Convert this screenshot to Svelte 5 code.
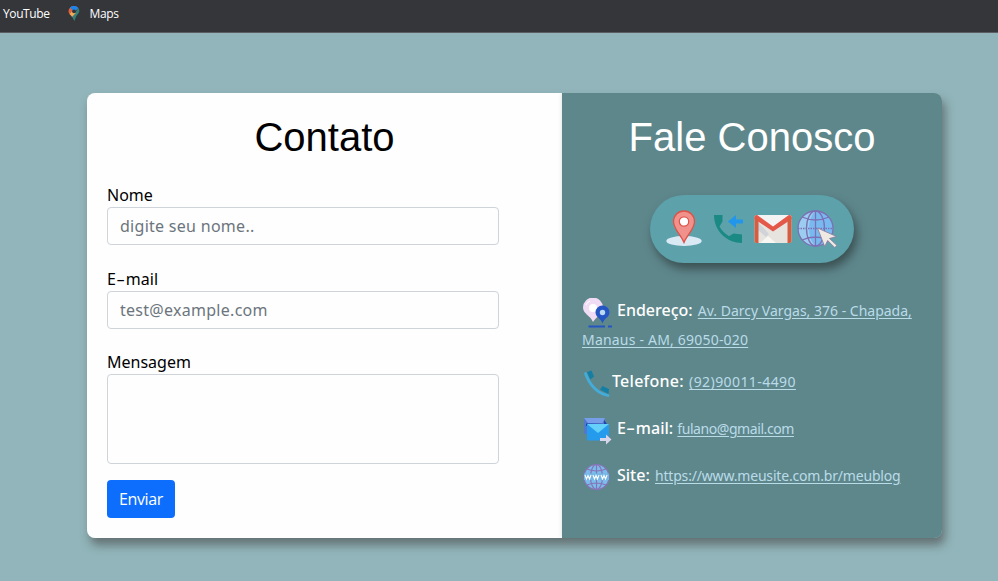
<script>
  let name = $state('');
  let email = $state('');
  let message = $state('');
</script>

<div class="page">
  <header>
    <span class="youtube">YouTube</span>
    <svg width="12" height="15" viewBox="0 0 12 15">
      <path d="M6 0a5.500 5.500 0 0 1 4.200 2L2.500 9.200C1.300 7.800.500 7 .500 5A5.500 5.500 0 0 1 6 0z" fill="#e0613d" />
      <path d="M2 1.600A5.500 5.500 0 0 1 10.300 2L6 6z" fill="#1a85ec" />
      <path d="M10.300 2c2.500 3.300 0 6-2 8L6.400 15 4.200 11z" fill="#34807a" />
      <path d="M1.700 8l2.500-3L7.800 7 4.100 10.900z" fill="#edab5b" />
      <circle cx="6" cy="5.300" r="1.900" fill="#35363a" />
    </svg>
    <span class="maps">Maps</span>
  </header>
  <main>
    <form>
      <h1>Contato</h1>
      <label for="nome">Nome</label>
      <input id="nome" class="i1" placeholder="digite seu nome.." bind:value={name} />
      <label for="email">E<span class="hyphen">-</span>mail</label>
      <input id="email" class="i2" placeholder="test@example.com" bind:value={email} />
      <label for="msg">Mensagem</label>
      <textarea id="msg" bind:value={message}></textarea>
      <button type="button">Enviar</button>
    </form>
    <section>
      <h1>Fale Conosco</h1>
      <div class="pill">
        <svg width="38" height="40" viewBox="0 0 38 40">
          <ellipse cx="19" cy="32" rx="17.700" ry="5" fill="#d9eaf5" />
          <path d="M19 33.500C16 26 8.500 20 8.500 12.500a10.500 10.500 0 0 1 21 0C29.500 20 22 26 19 33.500z" fill="#f0918b" stroke="#dd5348" stroke-width="1.300" />
          <circle cx="19" cy="12.500" r="4.700" fill="#fff" stroke="#dd5348" stroke-width="1.200" />
        </svg>
        <svg width="40" height="40" viewBox="0 0 40 40">
          <path d="M7 6h8.500v6.500l-3 5c2 4 5 7 9.500 9.700l4.500-2.700 8.500 1v8.500C20 34 7 22 7 6z" fill="#1b8984" />
          <path d="M21 12.500L29 6v4.500h7v4h-7V19z" fill="#2196ea" />
        </svg>
        <svg class="envelope" width="40" height="40" viewBox="0 0 40 40">
          <rect x="1.500" y="6" width="37" height="28" rx="2" fill="#e7e4df" />
          <path d="M4 6h32L20 20z" fill="#f3f3f3" />
          <path d="M5 13l11 12-3 3-8-7z" fill="#d0d3d7" />
          <path d="M7 34l8-7 8 7z" fill="#f7f6f2" />
          <path d="M1.500 8a2 2 0 0 1 3-1.700L20 17.500 35.500 6.300a2 2 0 0 1 3 1.700v2.200L20 22.500 1.500 10z" fill="#e35849" />
          <path d="M1.500 8v24q0 2 2 2h2V11zM38.500 8v24q0 2-2 2h-2V11z" fill="#d55d40" />
        </svg>
        <svg width="40" height="40" viewBox="0 0 40 40">
          <circle cx="18.500" cy="19.500" r="17.500" fill="#78baf0" />
          <path d="M18.500 2a17.500 17.500 0 0 0 0 35C10 30 10 9 18.500 2z" fill="#9ccdf0" />
          <g fill="none" stroke="#7b70b4" stroke-width="1.300">
            <circle cx="18.500" cy="19.500" r="17.500" /><ellipse cx="18.500" cy="19.500" rx="9" ry="17.500" />
            <path d="M18.500 2v35M5 8q13.500 6 27 0M5 31q13.500-6 27 0" /><path d="M1 19.500h35" stroke-dasharray="1.500 1" />
          </g>
          <path d="M20.500 19l19 8.500-7 2 7.500 7-2.300 2-7-7-3 6z" fill="#eee9e2" stroke="#8c789e" stroke-width=".8" />
        </svg>
      </div>
      <div class="contacts">
        <div class="row address">
          <svg width="30" height="30" viewBox="0 0 30 30">
            <path d="M11 24C9 18 1 16 1 9.500a10 10 0 0 1 20 0C21 16 14 19 11 24z" fill="#f1dcf5" /><circle cx="11" cy="10" r="4" fill="#fff" />
            <path d="M4 7q1-3 4-4" fill="none" stroke="#fff" />
            <path d="M20.500 25.500C19 20.500 13.500 19 13.500 14.500a7 7 0 0 1 14 0c0 4.500-5.500 6-7 11z" fill="#2455c3" /><circle cx="20.500" cy="14.500" r="2.700" fill="#b9d9f3" />
            <path d="M6.500 28.500h16.500M26 28.500h4" stroke="#2455c3" stroke-width="2" />
          </svg><b>Endereço:</b> <a href="#map" class="a1">Av. Darcy Vargas, 376 - Chapada,</a><br /><a href="#map" class="a2">Manaus - AM, 69050-020</a>
        </div>
        <div class="row phone">
          <svg width="30" height="30" viewBox="0 0 30 30">
            <path d="M3.500 4.500C7 14 14 24 26 26.500" fill="none" stroke="#44acd9" stroke-width="2.800" stroke-linecap="round" />
            <path d="M5 3l4.500-1.500 2.500 6-3.700 3zM18 20.500l2.500-3.500 6.500 3-.5 5z" fill="#147ea5" />
          </svg><b>Telefone:</b> <a href="tel:92900114490" class="a3">(92)90011-4490</a>
        </div>
        <div class="row mail">
          <svg width="30" height="30" viewBox="0 0 30 30">
            <rect x="2" y="3" width="21" height="16" fill="#5278cb" /><path d="M2 3h21l-2.500 5H6z" fill="#779ee8" />
            <path d="M4 11V8.500h2l16 .5V5l3 4z" fill="#1646bb" />
            <rect x="5" y="9" width="22" height="16.500" rx="1" fill="#249bec" /><path d="M5 9h22L16 18z" fill="#65d1fa" />
            <path d="M18 23h6v-3.500l5.500 5-5.500 5V26h-6z" fill="#d8d6ec" />
          </svg><b>E<span class="hyphen">-</span>mail:</b> <a href="mailto:fulano@gmail.com" class="a4">fulano@gmail.com</a>
        </div>
        <div class="row site">
          <svg width="30" height="30" viewBox="0 0 30 30">
            <circle cx="14.500" cy="15" r="12.500" fill="#79bdec" />
            <g fill="none" stroke="#8872b5" stroke-width="1.200"><circle cx="14.500" cy="15" r="12.500" /><ellipse cx="14.500" cy="15" rx="6" ry="12.500" /><path d="M14.500 2.500v25M5 7q9.500 4 19 0M5 23q9.500-4 19 0" /></g>
            <path d="M2 11.500h25v6.500H2z" fill="#73b5e5" />
            <path d="M3 13l1.500 4L6 13.500 7.500 17 9 13M11 13l1.500 4 1.500-3.500 1.500 3.500 1.500-4M19 13l1.500 4 1.500-3.500 1.500 3.500L25 13" fill="none" stroke="#fff" stroke-width="1.100" />
          </svg><b>Site:</b> <a href="https://www.meusite.com.br/meublog" class="a5">https://www.meusite.com.br/meublog</a>
        </div>
      </div>
    </section>
  </main>
</div>

<style>
  :global(body) { margin: 0; }
  * { box-sizing: border-box; }
  .page { height: 581px; overflow: hidden; background: #91b5ba; font: 16px/24px "Noto Sans", sans-serif; }
  header { height: 33px; padding: 0 3px 5px; display: flex; align-items: center; background: #35363a; border-bottom: 1px solid #5c5e62; color: #fff; font: 12px/18px "Open Sans", sans-serif; letter-spacing: -.4px; }
  header svg { margin: 0 10px 0 18px; }
  main { display: flex; width: 855px; height: 445px; margin: 60px 0 0 87px; border-radius: 8px; box-shadow: 3px 7px 10px rgba(70, 70, 70, .6); }
  form { width: 475px; padding: 20px; background: #fefefe; border-radius: 8px 0 0 8px; display: flex; flex-direction: column; align-items: flex-start; }
  section { width: 380px; padding: 20px; background: #5e878c; border-radius: 0 8px 8px 0; display: flex; flex-direction: column; align-items: center; box-shadow: 0 0 4px rgba(70, 90, 95, .2); clip-path: inset(0 0 0 -6px round 0 8px 8px 0); }
  h1 { align-self: center; margin: 0; font: 400 40px/48px "Liberation Sans", sans-serif; color: #000; }
  section h1 { color: #fff; }
  label { color: #000; height: 24px; }
  .hyphen { display: inline-block; transform: scaleX(1.7); margin: 0 2.400px; }
  form h1 { margin-bottom: 22px; }
  input, textarea { width: 392px; height: 38px; padding: 6px 12px; margin: 0; border: 1px solid #ced4da; border-radius: 4px; background: #fefefe; font: 16px/24px "Noto Sans", sans-serif; letter-spacing: .28px; outline: 0; resize: none; display: block; }
  input { margin-bottom: 22px; }
  .i2 { margin-bottom: 21px; }
  input::placeholder { color: #6c757d; opacity: 1; }
  textarea { height: 90px; margin-bottom: 16px; }
  button { width: 68px; height: 38px; padding: 0; border: 0; border-radius: 4px; background: #0d6efd; color: #fff; font: 16px/24px "Open Sans", sans-serif; letter-spacing: -.4px; }
  .pill { width: 204px; height: 68px; margin-top: 34px; padding: 14px 12px 14px 15px; display: flex; gap: 4px; border-radius: 34px; background: #5da1ab; box-shadow: 3px 6px 10px rgba(40, 50, 50, .65); flex: none; }
  .pill svg { flex: none; }
  .envelope { margin-left: 2px; }
  .contacts { width: 340px; margin-top: 33px; display: flex; flex-direction: column; color: #fff; white-space: nowrap; }
  .row { height: 30px; line-height: 29px; }
  .address { height: 59px; margin-bottom: 12px; }
  .phone, .mail { margin-bottom: 17px; }
  .row svg { display: inline-block; vertical-align: -9px; margin: 0 5px -3px 0; }
  .row.phone svg { margin-right: 0; }
  .mail svg, .site svg { position: relative; top: -1px; }
  b { font-weight: 500; }
  .phone b { letter-spacing: .25px; }
  a { font-size: 14px; color: #badbe8; text-decoration: underline; text-underline-offset: 2px; }
  .a1 { margin-left: 1px; }
  .a2 { letter-spacing: .2px; }
  .a3 { letter-spacing: .42px; margin-left: 1px; }
  .a4 { letter-spacing: -.43px; }
  .a5 { letter-spacing: -.18px; margin-left: 1px; }
</style>
